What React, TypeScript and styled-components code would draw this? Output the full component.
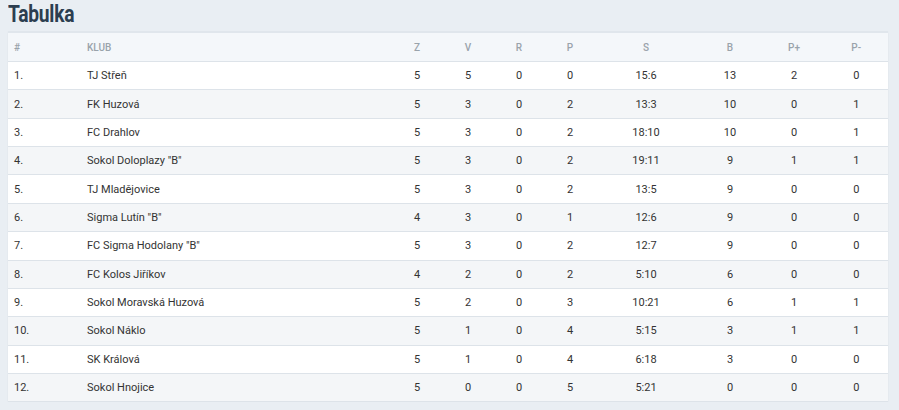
import React from "react";
import styled, { createGlobalStyle } from "styled-components";

const GlobalStyle = createGlobalStyle`
  body {
    margin: 0;
    background: #e9eef3;
    font-family: Roboto, "Liberation Sans", sans-serif;
  }
`;

const Page = styled.div`
  padding: 0 11px 0 8px;
`;

const Title = styled.h2`
  margin: 0;
  padding: 1px 0 0;
  height: 31px;
  box-sizing: border-box;
  font-family: Roboto, "Liberation Sans", sans-serif;
  font-weight: 700;
  font-size: 24px;
  line-height: 26px;
  letter-spacing: -0.3px;
  color: #2c3e50;
  transform: scaleX(0.8);
  transform-origin: left center;
`;

const Table = styled.table`
  width: 880px;
  table-layout: fixed;
  border-collapse: collapse;
  font-size: 11px;
  color: #333;
  border-top: 2px solid #e0e6ec;
  box-shadow: 0 1px 2px rgba(0, 0, 0, 0.05);
`;

const HeadCell = styled.th<{ $left?: boolean }>`
  height: 28px;
  padding: 0 6px;
  text-align: ${(p) => (p.$left ? "left" : "center")};
  font-weight: 500;
  font-size: 10px;
  text-transform: uppercase;
  color: #9aa3ab;
  background: #f4f7fa;
  border-bottom: 1px solid #dde3e9;
`;

const Row = styled.tr<{ $alt: boolean }>`
  background: ${(p) => (p.$alt ? "#f4f6f8" : "#ffffff")};
`;

const Cell = styled.td<{ $left?: boolean }>`
  height: 27.36px;
  padding: 0 6px;
  text-align: ${(p) => (p.$left ? "left" : "center")};
  border-bottom: 1px solid #dde3e9;
  white-space: nowrap;
`;

const widths = [73, 310.5, 51, 51, 51, 51, 101, 67, 61, 63.5];
const headers = ["#", "Klub", "Z", "V", "R", "P", "S", "B", "P+", "P-"];

const rows: (string | number)[][] = [
  ["1.", "TJ Střeň", 5, 5, 0, 0, "15:6", 13, 2, 0],
  ["2.", "FK Huzová", 5, 3, 0, 2, "13:3", 10, 0, 1],
  ["3.", "FC Drahlov", 5, 3, 0, 2, "18:10", 10, 0, 1],
  ["4.", 'Sokol Doloplazy "B"', 5, 3, 0, 2, "19:11", 9, 1, 1],
  ["5.", "TJ Mladějovice", 5, 3, 0, 2, "13:5", 9, 0, 0],
  ["6.", 'Sigma Lutín "B"', 4, 3, 0, 1, "12:6", 9, 0, 0],
  ["7.", 'FC Sigma Hodolany "B"', 5, 3, 0, 2, "12:7", 9, 0, 0],
  ["8.", "FC Kolos Jiříkov", 4, 2, 0, 2, "5:10", 6, 0, 0],
  ["9.", "Sokol Moravská Huzová", 5, 2, 0, 3, "10:21", 6, 1, 1],
  ["10.", "Sokol Náklo", 5, 1, 0, 4, "5:15", 3, 1, 1],
  ["11.", "SK Králová", 5, 1, 0, 4, "6:18", 3, 0, 0],
  ["12.", "Sokol Hnojice", 5, 0, 0, 5, "5:21", 0, 0, 0],
];

const App: React.FC = () => {
  return (
    <Page>
      <GlobalStyle />
      <Title>Tabulka</Title>
      <Table>
        <colgroup>
          {widths.map((w, i) => (
            <col key={i} style={{ width: w }} />
          ))}
        </colgroup>
        <thead>
          <tr>
            {headers.map((h, i) => (
              <HeadCell key={h} $left={i < 2}>
                {h}
              </HeadCell>
            ))}
          </tr>
        </thead>
        <tbody>
          {rows.map((r, ri) => (
            <Row key={ri} $alt={ri % 2 === 1}>
              {r.map((v, ci) => (
                <Cell key={ci} $left={ci < 2}>
                  {v}
                </Cell>
              ))}
            </Row>
          ))}
        </tbody>
      </Table>
    </Page>
  );
};

export default App;
